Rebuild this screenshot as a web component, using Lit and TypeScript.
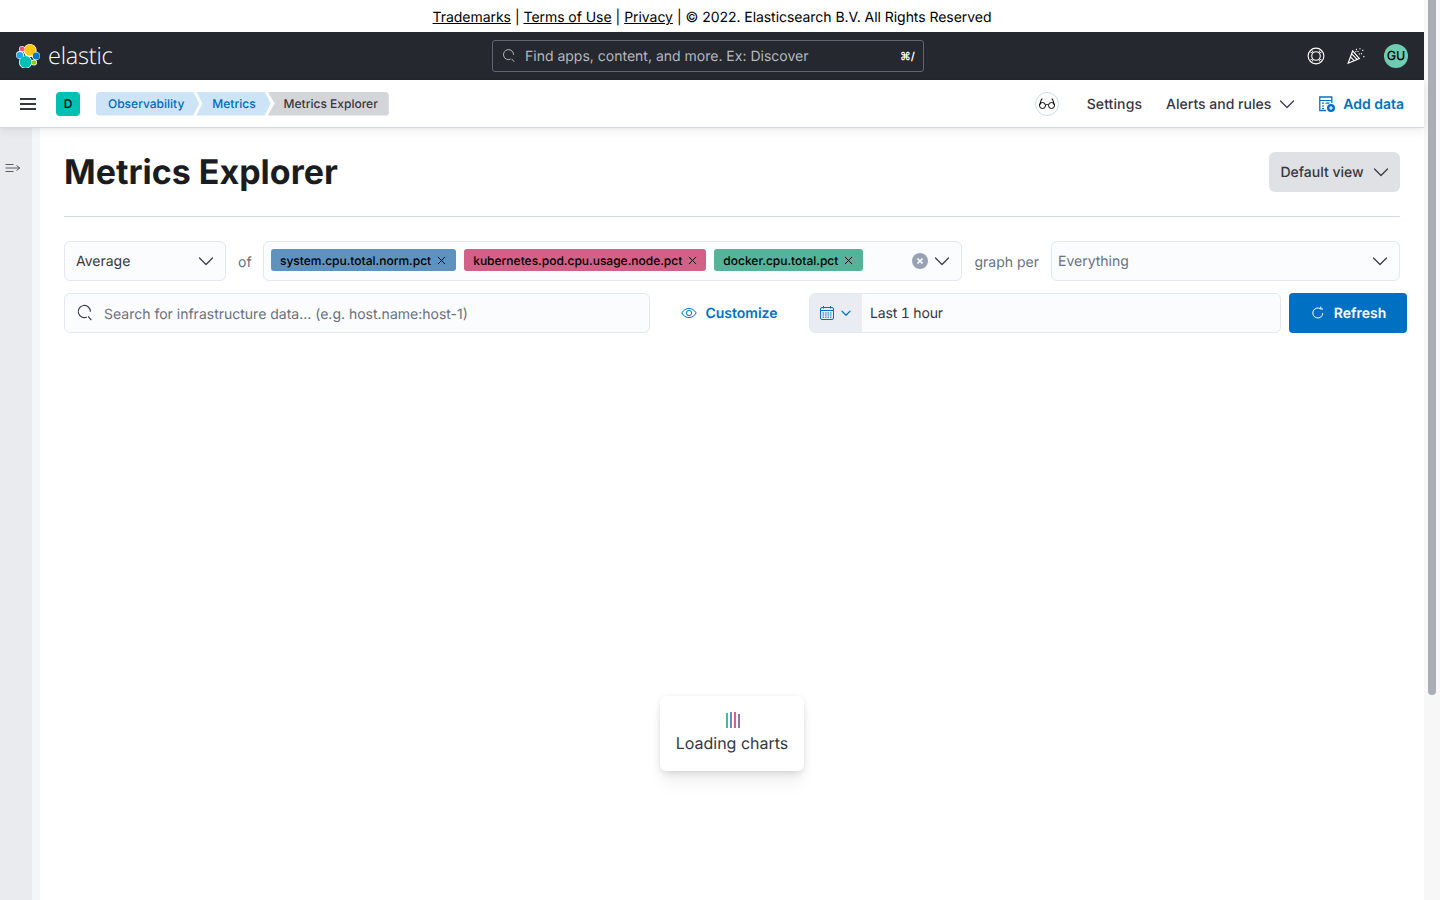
import { LitElement, html, css } from "lit";
import { customElement } from "lit/decorators.js";

const chevron = (size = 16, color = "#343741", weight = 1.2) => html`<svg width=${size} height=${size} viewBox="0 0 16 16" fill="none"><path d="M1.5 5l6.5 6.5L14.5 5" stroke=${color} stroke-width=${weight} stroke-linecap="round" stroke-linejoin="round" /></svg>`;

const cross = html`<svg width="9" height="9" viewBox="0 0 10 10" fill="none"><path d="M1 1l8 8M9 1L1 9" stroke="#000" stroke-width="1.1" /></svg>`;

@customElement("app-root")
export class AppRoot extends LitElement {
  static styles = css`
    :host {
      display: flex;
      width: 1440px;
      height: 900px;
      overflow: hidden;
      background: #fff;
      font-family: Inter, "Liberation Sans", sans-serif;
      color: #343741;
      font-size: 14px;
      text-rendering: geometricPrecision;
    }
    svg { display: block; flex: none; }

    .page { width: 1424px; display: flex; flex-direction: column; }
    .scrollbar { width: 16px; background: #f7f7f7; padding: 0 4px; box-sizing: border-box; }
    .thumb { height: 695px; background: #abaeb6; border-radius: 0 0 4px 4px; }

    .legal { height: 32px; display: flex; align-items: center; justify-content: center; gap: 4px; color: #000; font-size: 14px; letter-spacing: -0.05px; padding-top: 3px; box-sizing: border-box; }
    .legal a { color: #000; text-decoration: underline; }

    .header { height: 48px; background: #25282f; display: flex; align-items: center; padding: 0 16px; }
    .logo { display: flex; align-items: center; gap: 8px; width: 476px; color: #fff; font-family: "Open Sans", sans-serif; font-weight: 300; font-size: 23.5px; letter-spacing: -0.2px; }
    .logo span { margin-top: -2px; }
    .global-search { width: 432px; height: 32px; box-sizing: border-box; border: 1px solid #60646d; border-radius: 3px; display: flex; align-items: center; padding: 0 8px; gap: 8px; color: #b5b8bf; }
    .global-search span { flex: 1; }
    .global-search b { color: #fff; font-size: 11px; font-weight: 600; }
    .header-right { margin-left: auto; display: flex; align-items: center; }
    .hicon { width: 40px; display: flex; justify-content: center; }
    .avatar { width: 24px; height: 24px; margin-left: 8px; border-radius: 50%; background: #6dccb1; color: #000; font-size: 12.5px; font-weight: 500; display: flex; align-items: center; justify-content: center; }

    .nav { height: 47px; display: flex; align-items: center; padding: 0 20px; position: relative; z-index: 2; box-shadow: 0 1px 0 #d3dae6, 0 1.9px 4px rgba(0, 0, 0, 0.05), 0 4.5px 10px rgba(0, 0, 0, 0.05); background: #fff; }
    .space { width: 24px; height: 24px; margin-left: 20px; background: #00bfb3; border-radius: 4px; color: #000; font-size: 12px; font-weight: 500; display: flex; align-items: center; justify-content: center; }
    .crumbs { display: flex; margin-left: 16px; font-size: 12px; font-weight: 500; line-height: 24px; }
    .crumb { background: #cce4f5; color: #006bb8; padding: 0 15px 0 16px; margin-left: -3px; clip-path: polygon(0 0, calc(100% - 6px) 0, 100% 50%, calc(100% - 6px) 100%, 0 100%, 6px 50%); }
    .crumb.first { margin-left: 0; padding-left: 12px; border-radius: 4px 0 0 4px; clip-path: polygon(0 0, calc(100% - 6px) 0, 100% 50%, calc(100% - 6px) 100%, 0 100%); }
    .crumb.last { background: #d4d5d8; color: #343741; padding: 0 11px 0 16px; border-radius: 0 4px 4px 0; clip-path: polygon(0 0, 100% 0, 100% 100%, 0 100%, 7px 50%); }
    .nav-right { margin-left: auto; display: flex; align-items: center; font-weight: 500; color: #343741; }
    .nav-right span { margin-top: 1px; }
    .settings { letter-spacing: 0.1px; }
    .glasses { width: 24px; height: 24px; box-sizing: border-box; border: 1px solid #d3dae6; border-radius: 50%; display: flex; align-items: center; justify-content: center; margin-right: 28px; }
    .alerts { display: flex; align-items: center; gap: 8px; margin-left: 24px; }
    .add { display: flex; align-items: center; gap: 8px; margin-left: 24px; color: #0071c2; font-weight: 600; }

    .body { flex: 1; display: flex; }
    .side { width: 32px; background: #e9ebef; padding: 33px 0 0 5px; box-sizing: border-box; }
    .side-edge { width: 8px; background: #f5f6f8; }
    .main { flex: 1; padding: 0 24px; min-width: 0; }
    .title-row { height: 89px; display: flex; align-items: center; justify-content: space-between; border-bottom: 1px solid #d3dae6; }
    .title-row h1 { margin: 1px 0 0; font-size: 34px; font-weight: 700; color: #1a1c21; }
    .view-btn { height: 40px; width: 131px; box-sizing: border-box; background: #e0e1e4; border-radius: 6px; display: flex; align-items: center; justify-content: center; gap: 9px; font-weight: 500; margin-top: 1px; }

    .row { display: flex; align-items: center; gap: 12px; margin-top: 12px; }
    .row.first { margin-top: 24px; }
    .control { height: 40px; box-sizing: border-box; background: #fbfcfd; border: 1px solid #e4e7f0; border-radius: 6px; display: flex; align-items: center; flex: none; }
    .select { justify-content: space-between; padding: 0 11px; color: #343741; }
    .avg { width: 162px; }
    .label { color: #69707d; padding-top: 2px; }
    .of { width: 13px; }
    .combo { flex: 1; padding: 0 11px 0 7px; gap: 8px; }
    .pill { height: 22px; border-radius: 3px; padding: 0 10px 0 9px; display: flex; align-items: center; gap: 6px; font-size: 12px; font-weight: 500; color: #000; margin-top: -2px; }
    .pill.blue { background: #5e93c0; }
    .pill.pink { background: #d36086; padding-right: 9px; }
    .pill.green { background: #54b399; }
    .combo-end { margin-left: auto; display: flex; align-items: center; gap: 6px; }
    .clear { width: 16px; height: 16px; border-radius: 50%; background: #98a2b3; display: flex; align-items: center; justify-content: center; }
    .per { width: 349px; padding: 0 11px 0 6px; color: #69707d; }
    .search { width: 586px; padding: 0 11px; gap: 10px; color: #69707d; }
    .search span { margin-top: 2px; }
    .customize { width: 135px; flex: none; display: flex; align-items: center; justify-content: center; gap: 8px; color: #0071c2; font-weight: 600; }
    .date { width: 472px; overflow: hidden; font-feature-settings: "tnum"; }
    .date-btn { width: 52px; height: 100%; padding-left: 9px; box-sizing: border-box; background: #e9edf3; display: flex; align-items: center; gap: 6px; flex: none; }
    .date span { padding-left: 8px; letter-spacing: -0.15px; }
    .refresh { width: 118px; height: 40px; box-sizing: border-box; margin-left: -4px; margin-right: -7px; background: #0071c2; color: #fff; font-weight: 600; border-radius: 4px; display: flex; align-items: center; justify-content: center; gap: 8px; flex: none; }

    .loading-wrap { display: flex; justify-content: center; padding-top: 363px; }
    .loading { width: 144px; height: 75px; box-sizing: border-box; border-radius: 6px; background: #fff; box-shadow: 0 0.9px 4px -1px rgba(0, 0, 0, 0.08), 0 2.6px 8px -1px rgba(0, 0, 0, 0.06), 0 5.7px 12px -1px rgba(0, 0, 0, 0.05), 0 15px 15px -1px rgba(0, 0, 0, 0.04); display: flex; flex-direction: column; align-items: center; padding-top: 16px; gap: 3px; font-size: 16px; line-height: 24px; }
    .bars { display: flex; gap: 2px; align-items: flex-end; height: 16px; margin-left: 2px; }
    .bars i { width: 2px; display: block; }
    .bars .green { height: 15px; background: #54b399; }
    .bars .blue { height: 16px; background: #6092c0; }
    .bars .pink { height: 16px; background: #d36086; }
    .bars .purple { height: 14px; background: #9170b8; }
  `;

  render() {
    return html`
      <div class="page">
        <div class="legal">
          <a>Trademarks</a><span>|</span><a>Terms of Use</a><span>|</span><a>Privacy</a><span>|</span><span>© 2022. Elasticsearch B.V. All Rights Reserved</span>
        </div>
        <div class="header">
          <div class="logo">
            <svg width="24" height="24" viewBox="0 0 24 24">
              <g fill="#fff">
                <circle cx="14" cy="6.5" r="6.6" /><circle cx="9.5" cy="18" r="6.6" /><circle cx="4" cy="11" r="4" />
                <circle cx="6" cy="5" r="3" /><circle cx="20" cy="12" r="4.2" /><circle cx="18" cy="18.5" r="3" />
              </g>
              <circle cx="14" cy="6" r="5.8" fill="#fec514" />
              <circle cx="9.5" cy="18" r="5.9" fill="#00bfb3" />
              <circle cx="3.8" cy="11.2" r="3.3" fill="#1ba9f5" />
              <circle cx="6" cy="5" r="2.4" fill="#f04e98" />
              <circle cx="20.3" cy="12" r="3.5" fill="#0077cc" />
              <circle cx="18" cy="18.5" r="2.3" fill="#93c90e" />
            </svg>
            <span>elastic</span>
          </div>
          <div class="global-search">
            <svg width="16" height="16" viewBox="0 0 16 16" fill="none" stroke="#b5b8bf"><path d="M12.5 6.8a5 5 0 1 0-3 4.4M10.6 10.8l2.6 3" stroke-width="1" /></svg>
            <span>Find apps, content, and more. Ex: Discover</span>
            <b>⌘/</b>
          </div>
          <div class="header-right">
            <div class="hicon">
              <svg width="18" height="18" viewBox="0 0 16 16" fill="none" stroke="#fff" stroke-width="1"><circle cx="8" cy="8" r="7" /><circle cx="8" cy="8" r="3.8" /><path d="M2.8 4.2l2.4 1.6M4.2 2.8l1.6 2.4M13.2 4.2l-2.4 1.6M11.8 2.8l-1.6 2.4M2.8 11.8l2.4-1.6M4.2 13.2l1.6-2.4M13.2 11.8l-2.4-1.6M11.8 13.2l-1.6-2.4" stroke-width="0.8" /></svg>
            </div>
            <div class="hicon">
              <svg width="18" height="18" viewBox="0 0 16 16" fill="none" stroke="#fff" stroke-width="1"><path d="M1 14.5L5 3.5l6 6.8zM3.2 9l3.6 3.6M4.2 6.2l5 5" /><path d="M7.5 4.5c.8-.7 1-1.6.8-2.8M10.5 6.5c.8-.6 1.8-.8 3-.5M11.5 1v1M14 2.5v1M15 8v1M9.8 3.5v1" stroke-dasharray="1 1" /></svg>
            </div>
            <div class="avatar">GU</div>
          </div>
        </div>
        <div class="nav">
          <svg width="16" height="16" viewBox="0 0 16 16" fill="#343741"><rect y="2" width="16" height="2" /><rect y="7" width="16" height="2" /><rect y="12" width="16" height="2" /></svg>
          <div class="space">D</div>
          <div class="crumbs">
            <div class="crumb first">Observability</div>
            <div class="crumb">Metrics</div>
            <div class="crumb last">Metrics Explorer</div>
          </div>
          <div class="nav-right">
            <div class="glasses">
              <svg width="18" height="14" viewBox="0 0 18 14" fill="none" stroke="#000" stroke-width="1"><circle cx="4.5" cy="8.5" r="3" /><circle cx="13.5" cy="8.5" r="3" /><path d="M7.5 8c1-.6 2-.6 3 0M1.5 8.5L3.5 2h1M16.5 8.5L14.5 2h-1" /></svg>
            </div>
            <span class="settings">Settings</span>
            <div class="alerts"><span>Alerts and rules</span>${chevron()}</div>
            <div class="add">
              <svg width="16" height="16" viewBox="0 0 16 16" fill="none"><path d="M7 14.5H0.8V1h12v6" stroke="#0071c2" stroke-width="1.3" /><path d="M1 4.5h11M3 7.2h2M6.5 7.2h4M3 10h2M3 12.5h2" stroke="#0071c2" stroke-width="1.2" /><circle cx="12" cy="12" r="4" fill="#0071c2" /><path d="M12 10v4M10 12h4" stroke="#fff" /></svg>
              <span>Add data</span>
            </div>
          </div>
        </div>
        <div class="body">
          <div class="side">
            <svg width="16" height="16" viewBox="0 0 16 16" fill="none" stroke="#343741" stroke-width="0.8"><path d="M0.5 4.5h8M0.5 8h14M0.5 11.5h8M11.5 5.5L14.8 8l-3.3 2.5" /></svg>
          </div>
          <div class="side-edge"></div>
          <div class="main">
            <div class="title-row">
              <h1>Metrics Explorer</h1>
              <div class="view-btn"><span>Default view</span>${chevron()}</div>
            </div>
            <div class="row first">
              <div class="control select avg"><span>Average</span>${chevron()}</div>
              <div class="label of">of</div>
              <div class="control combo">
                <div class="pill blue"><span>system.cpu.total.norm.pct</span>${cross}</div>
                <div class="pill pink"><span>kubernetes.pod.cpu.usage.node.pct</span>${cross}</div>
                <div class="pill green"><span>docker.cpu.total.pct</span>${cross}</div>
                <div class="combo-end">
                  <div class="clear"><svg width="8" height="8" viewBox="0 0 8 8" fill="none"><path d="M1.5 1.5l5 5M6.5 1.5l-5 5" stroke="#fff" stroke-width="1.6" /></svg></div>
                  ${chevron()}
                </div>
              </div>
              <div class="label">graph per</div>
              <div class="control select per"><span>Everything</span>${chevron()}</div>
            </div>
            <div class="row">
              <div class="control search">
                <svg width="18" height="18" viewBox="0 0 16 16" fill="none" stroke="#343741"><path d="M12.8 6.8a5.4 5.4 0 1 0-3.2 4.8M10.8 11l2.8 3.4" stroke-width="1" /></svg>
                <span>Search for infrastructure data... (e.g. host.name:host-1)</span>
              </div>
              <div class="customize">
                <svg width="16" height="16" viewBox="0 0 16 16" fill="none" stroke="#0071c2" stroke-width="1"><path d="M0.8 8C2.5 5 5 3.5 8 3.5S13.5 5 15.2 8C13.5 11 11 12.5 8 12.5S2.5 11 0.8 8z" /><circle cx="8" cy="8" r="2.6" /></svg>
                <span>Customize</span>
              </div>
              <div class="control date">
                <div class="date-btn">
                  <svg width="16" height="16" viewBox="0 0 16 16" fill="none" stroke="#0071c2" stroke-width="1"><rect x="1.5" y="2.5" width="13" height="12" rx="1.5" /><path d="M1.5 5.5h13M4.5 1v2.5M11.5 1v2.5" /><path d="M3.5 8h9M3.5 10h9M3.5 12.2h9" stroke-dasharray="1.5 1" /></svg>
                  ${chevron(10, "#0071c2", 2)}
                </div>
                <span>Last 1 hour</span>
              </div>
              <div class="refresh">
                <svg width="16" height="16" viewBox="0 0 16 16" fill="none" stroke="#fff" stroke-width="1"><path d="M12.8 8a5 5 0 1 1-2-4M10.8 1.5V4H13" /></svg>
                <span>Refresh</span>
              </div>
            </div>
            <div class="loading-wrap">
              <div class="loading">
                <div class="bars"><i class="green"></i><i class="blue"></i><i class="pink"></i><i class="purple"></i></div>
                <div>Loading charts</div>
              </div>
            </div>
          </div>
        </div>
      </div>
      <div class="scrollbar"><div class="thumb"></div></div>
    `;
  }
}
